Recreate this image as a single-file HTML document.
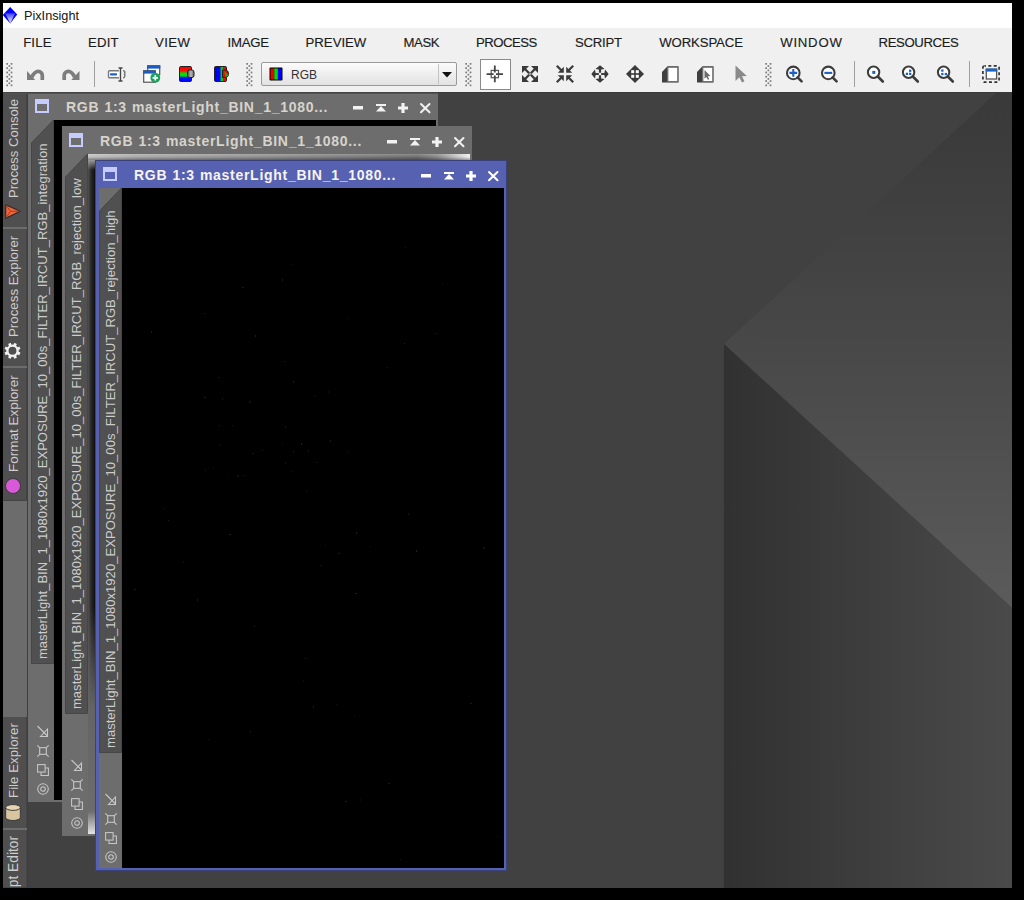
<!DOCTYPE html>
<html><head><meta charset="utf-8"><style>
*{box-sizing:border-box}
html,body{margin:0;padding:0}
body{width:1024px;height:900px;background:#000;position:relative;overflow:hidden;font-family:"Liberation Sans",sans-serif}
.a{position:absolute}
svg.a{overflow:visible}
.mi{position:absolute;top:36px;font-size:13.2px;color:#1c1c1c;line-height:13px;white-space:nowrap;-webkit-text-stroke:0.15px #1c1c1c}
.ttl{position:absolute;font-weight:bold;font-size:14px;letter-spacing:0.72px;word-spacing:0.5px;line-height:18px;color:#dcdad2;white-space:nowrap}
.rot{position:absolute;font-size:13px;color:#cccccc;white-space:nowrap;transform-origin:0 0;transform:rotate(-90deg);line-height:15px}
.sep{position:absolute;width:1px;height:26px;background:#a0a0a0}
</style></head><body>
<div class="a" style="left:3px;top:3px;width:1009px;height:25px;background:#fff"></div>
<svg class="a" style="left:3px;top:7px" width="15" height="17" viewBox="0 0 15 17"><defs><linearGradient id="dg" x1="0" y1="0" x2="0" y2="1"><stop offset="0" stop-color="#3a3aff"/><stop offset="0.55" stop-color="#a8b0f4"/><stop offset="1" stop-color="#e4e6f6"/></linearGradient></defs>
 <polygon points="7.2,0 14.2,7.6 7.2,16.6 -0.2,8" fill="#0000ff"/>
 <polygon points="2.2,6.2 12.2,6.2 7.2,16.6" fill="url(#dg)"/></svg>
<div class="a" style="left:24px;top:9px;font-size:12.7px;line-height:14px;color:#1a1a1a;-webkit-text-stroke:0.05px #1a1a1a">PixInsight</div>
<div class="a" style="left:3px;top:28px;width:1009px;height:64px;background:#f0f0f0"></div>
<div class="mi" style="left:23.2px;letter-spacing:0.13px">FILE</div>
<div class="mi" style="left:88px;letter-spacing:0.17px">EDIT</div>
<div class="mi" style="left:155px;letter-spacing:0.4px">VIEW</div>
<div class="mi" style="left:227.6px;letter-spacing:-0.28px">IMAGE</div>
<div class="mi" style="left:305.6px;letter-spacing:-0.02px">PREVIEW</div>
<div class="mi" style="left:403.6px;letter-spacing:-0.5px">MASK</div>
<div class="mi" style="left:476px;letter-spacing:-0.52px">PROCESS</div>
<div class="mi" style="left:575px;letter-spacing:-0.28px">SCRIPT</div>
<div class="mi" style="left:659.2px;letter-spacing:-0.12px">WORKSPACE</div>
<div class="mi" style="left:780.2px;letter-spacing:0.76px">WINDOW</div>
<div class="mi" style="left:878.5px;letter-spacing:-0.39px">RESOURCES</div>
<svg class="a" style="left:6px;top:62px" width="7" height="25" viewBox="0 0 7 25"><rect x="0.3" y="1.0" width="1.7" height="1.7" fill="#7c7c7c"/><rect x="4.7" y="1.0" width="1.7" height="1.7" fill="#7c7c7c"/><rect x="0.3" y="5.3" width="1.7" height="1.7" fill="#7c7c7c"/><rect x="4.7" y="5.3" width="1.7" height="1.7" fill="#7c7c7c"/><rect x="0.3" y="9.6" width="1.7" height="1.7" fill="#7c7c7c"/><rect x="4.7" y="9.6" width="1.7" height="1.7" fill="#7c7c7c"/><rect x="0.3" y="13.899999999999999" width="1.7" height="1.7" fill="#7c7c7c"/><rect x="4.7" y="13.899999999999999" width="1.7" height="1.7" fill="#7c7c7c"/><rect x="0.3" y="18.2" width="1.7" height="1.7" fill="#7c7c7c"/><rect x="4.7" y="18.2" width="1.7" height="1.7" fill="#7c7c7c"/><rect x="0.3" y="22.5" width="1.7" height="1.7" fill="#7c7c7c"/><rect x="4.7" y="22.5" width="1.7" height="1.7" fill="#7c7c7c"/><rect x="2.5" y="3.2" width="1.7" height="1.7" fill="#7c7c7c"/><rect x="2.5" y="7.5" width="1.7" height="1.7" fill="#7c7c7c"/><rect x="2.5" y="11.8" width="1.7" height="1.7" fill="#7c7c7c"/><rect x="2.5" y="16.099999999999998" width="1.7" height="1.7" fill="#7c7c7c"/><rect x="2.5" y="20.4" width="1.7" height="1.7" fill="#7c7c7c"/></svg>
<svg class="a" style="left:246px;top:62px" width="7" height="25" viewBox="0 0 7 25"><rect x="0.3" y="1.0" width="1.7" height="1.7" fill="#7c7c7c"/><rect x="4.7" y="1.0" width="1.7" height="1.7" fill="#7c7c7c"/><rect x="0.3" y="5.3" width="1.7" height="1.7" fill="#7c7c7c"/><rect x="4.7" y="5.3" width="1.7" height="1.7" fill="#7c7c7c"/><rect x="0.3" y="9.6" width="1.7" height="1.7" fill="#7c7c7c"/><rect x="4.7" y="9.6" width="1.7" height="1.7" fill="#7c7c7c"/><rect x="0.3" y="13.899999999999999" width="1.7" height="1.7" fill="#7c7c7c"/><rect x="4.7" y="13.899999999999999" width="1.7" height="1.7" fill="#7c7c7c"/><rect x="0.3" y="18.2" width="1.7" height="1.7" fill="#7c7c7c"/><rect x="4.7" y="18.2" width="1.7" height="1.7" fill="#7c7c7c"/><rect x="0.3" y="22.5" width="1.7" height="1.7" fill="#7c7c7c"/><rect x="4.7" y="22.5" width="1.7" height="1.7" fill="#7c7c7c"/><rect x="2.5" y="3.2" width="1.7" height="1.7" fill="#7c7c7c"/><rect x="2.5" y="7.5" width="1.7" height="1.7" fill="#7c7c7c"/><rect x="2.5" y="11.8" width="1.7" height="1.7" fill="#7c7c7c"/><rect x="2.5" y="16.099999999999998" width="1.7" height="1.7" fill="#7c7c7c"/><rect x="2.5" y="20.4" width="1.7" height="1.7" fill="#7c7c7c"/></svg>
<svg class="a" style="left:465px;top:62px" width="7" height="25" viewBox="0 0 7 25"><rect x="0.3" y="1.0" width="1.7" height="1.7" fill="#7c7c7c"/><rect x="4.7" y="1.0" width="1.7" height="1.7" fill="#7c7c7c"/><rect x="0.3" y="5.3" width="1.7" height="1.7" fill="#7c7c7c"/><rect x="4.7" y="5.3" width="1.7" height="1.7" fill="#7c7c7c"/><rect x="0.3" y="9.6" width="1.7" height="1.7" fill="#7c7c7c"/><rect x="4.7" y="9.6" width="1.7" height="1.7" fill="#7c7c7c"/><rect x="0.3" y="13.899999999999999" width="1.7" height="1.7" fill="#7c7c7c"/><rect x="4.7" y="13.899999999999999" width="1.7" height="1.7" fill="#7c7c7c"/><rect x="0.3" y="18.2" width="1.7" height="1.7" fill="#7c7c7c"/><rect x="4.7" y="18.2" width="1.7" height="1.7" fill="#7c7c7c"/><rect x="0.3" y="22.5" width="1.7" height="1.7" fill="#7c7c7c"/><rect x="4.7" y="22.5" width="1.7" height="1.7" fill="#7c7c7c"/><rect x="2.5" y="3.2" width="1.7" height="1.7" fill="#7c7c7c"/><rect x="2.5" y="7.5" width="1.7" height="1.7" fill="#7c7c7c"/><rect x="2.5" y="11.8" width="1.7" height="1.7" fill="#7c7c7c"/><rect x="2.5" y="16.099999999999998" width="1.7" height="1.7" fill="#7c7c7c"/><rect x="2.5" y="20.4" width="1.7" height="1.7" fill="#7c7c7c"/></svg>
<svg class="a" style="left:765px;top:62px" width="7" height="25" viewBox="0 0 7 25"><rect x="0.3" y="1.0" width="1.7" height="1.7" fill="#7c7c7c"/><rect x="4.7" y="1.0" width="1.7" height="1.7" fill="#7c7c7c"/><rect x="0.3" y="5.3" width="1.7" height="1.7" fill="#7c7c7c"/><rect x="4.7" y="5.3" width="1.7" height="1.7" fill="#7c7c7c"/><rect x="0.3" y="9.6" width="1.7" height="1.7" fill="#7c7c7c"/><rect x="4.7" y="9.6" width="1.7" height="1.7" fill="#7c7c7c"/><rect x="0.3" y="13.899999999999999" width="1.7" height="1.7" fill="#7c7c7c"/><rect x="4.7" y="13.899999999999999" width="1.7" height="1.7" fill="#7c7c7c"/><rect x="0.3" y="18.2" width="1.7" height="1.7" fill="#7c7c7c"/><rect x="4.7" y="18.2" width="1.7" height="1.7" fill="#7c7c7c"/><rect x="0.3" y="22.5" width="1.7" height="1.7" fill="#7c7c7c"/><rect x="4.7" y="22.5" width="1.7" height="1.7" fill="#7c7c7c"/><rect x="2.5" y="3.2" width="1.7" height="1.7" fill="#7c7c7c"/><rect x="2.5" y="7.5" width="1.7" height="1.7" fill="#7c7c7c"/><rect x="2.5" y="11.8" width="1.7" height="1.7" fill="#7c7c7c"/><rect x="2.5" y="16.099999999999998" width="1.7" height="1.7" fill="#7c7c7c"/><rect x="2.5" y="20.4" width="1.7" height="1.7" fill="#7c7c7c"/></svg>
<div class="sep" style="left:94px;top:61px"></div>
<div class="sep" style="left:854px;top:61px"></div>
<div class="sep" style="left:969px;top:61px"></div>
<svg class="a" style="left:27px;top:69px" width="18" height="12" viewBox="0 0 18 12"><polygon points="0,1.9 0,11 8.2,11" fill="#7d7d7d"/><path d="M4.8 8.2 Q7 3 11.2 2.3 A4.1 4.1 0 0 1 15.3 6.3 L15.3 11" fill="none" stroke="#7d7d7d" stroke-width="3.7"/></svg>
<svg class="a" style="left:62px;top:69px" width="18" height="12" viewBox="0 0 18 12"><g transform="translate(17.5,0) scale(-1,1)"><polygon points="0,1.9 0,11 8.2,11" fill="#7d7d7d"/><path d="M4.8 8.2 Q7 3 11.2 2.3 A4.1 4.1 0 0 1 15.3 6.3 L15.3 11" fill="none" stroke="#7d7d7d" stroke-width="3.7"/></g></svg>
<svg class="a" style="left:107px;top:66px" width="19" height="16" viewBox="0 0 19 16"><rect x="1.5" y="4.8" width="16" height="7" rx="1" fill="#fff" stroke="#7a7a7a" stroke-width="1.4"/><rect x="3" y="7.2" width="7" height="2.4" rx="0.8" fill="#1a62c8"/><rect x="12" y="3" width="4" height="11" fill="#f0f0f0"/><path d="M11.5 2h4M13.5 2v13M11.5 15h4" stroke="#444" stroke-width="1.3" fill="none"/><path d="M17.8 5v6" stroke="#7a7a7a" stroke-width="1.2"/></svg>
<svg class="a" style="left:143px;top:65px" width="18" height="18" viewBox="0 0 18 18"><rect x="4.7" y="0.7" width="12" height="9" fill="#fff" stroke="#555" stroke-width="1.2"/><rect x="4.1" y="0.6" width="13.2" height="3" fill="#1a5cc0"/><rect x="0.7" y="5.7" width="11.5" height="11.5" fill="#fff" stroke="#555" stroke-width="1.2"/><rect x="0.1" y="5.6" width="12.7" height="3" fill="#1a5cc0"/><circle cx="12.3" cy="12.8" r="4.9" fill="#19a25c"/><path d="M9.6 12.8h5.4M12.3 10.1v5.4" stroke="#fff" stroke-width="1.7"/></svg>
<svg class="a" style="left:179px;top:66px" width="17" height="16" viewBox="0 0 17 16"><defs><linearGradient id="rgbv" x1="0" y1="0" x2="0" y2="1"><stop offset="0.05" stop-color="#ff0000"/><stop offset="0.3" stop-color="#ff1000"/><stop offset="0.45" stop-color="#00e000"/><stop offset="0.62" stop-color="#00e000"/><stop offset="0.75" stop-color="#0010ff"/><stop offset="1" stop-color="#0000ff"/></linearGradient>
<linearGradient id="knob" x1="0" y1="0" x2="1" y2="0"><stop offset="0" stop-color="#444"/><stop offset="0.5" stop-color="#bbb"/><stop offset="1" stop-color="#666"/></linearGradient></defs>
<rect x="0.5" y="0.5" width="12" height="15" rx="1.2" fill="url(#rgbv)" stroke="#222" stroke-width="1"/><rect x="8.5" y="4" width="6.5" height="7.5" rx="2" fill="url(#knob)" stroke="#222" stroke-width="1"/></svg>
<svg class="a" style="left:214px;top:66px" width="17" height="16" viewBox="0 0 17 16"><rect x="0.5" y="0.5" width="12" height="15" rx="1.2" fill="#0000ff" stroke="#222" stroke-width="1"/><rect x="6.5" y="1" width="3" height="14" fill="#00d000"/><rect x="9.5" y="1" width="2.5" height="14" fill="#ff0000"/><path d="M8.5 4 h3.5 a3 3.8 0 0 1 0 7.5 h-3.5z" fill="#ff0000" stroke="#222" stroke-width="1"/><polygon points="10,5 14.5,9.5 12,11" fill="#00c000"/></svg>
<div class="a" style="left:261px;top:62px;width:196px;height:24px;border:1px solid #9a9a9a;border-radius:2px;background:linear-gradient(#fbfbfb,#e2e2e2)"></div>
<div class="a" style="left:438px;top:64px;width:1px;height:20px;background:#c4c4c4"></div>
<svg class="a" style="left:442px;top:72px" width="10" height="6" viewBox="0 0 10 6"><polygon points="0,0 10,0 5,5.5" fill="#111"/></svg>
<svg class="a" style="left:269px;top:67px" width="14" height="14" viewBox="0 0 14 14"><rect x="0.5" y="0.5" width="13" height="13" rx="1" fill="#000"/><rect x="1.5" y="1.5" width="3.8" height="11" fill="#f00000"/><rect x="5.3" y="1.5" width="3.6" height="11" fill="#00e000"/><rect x="8.9" y="1.5" width="3.6" height="11" fill="#0000ff"/></svg>
<div class="a" style="left:291px;top:68px;font-size:12px;line-height:14px;color:#333">RGB</div>
<div class="a" style="left:480px;top:59px;width:31px;height:31px;border:1.5px solid #8a8a8a;background:#fff"></div>
<svg class="a" style="left:486px;top:65px" width="18" height="18" viewBox="0 0 18 18"><rect x="5.2" y="5.4" width="7.3" height="7.3" fill="none" stroke="#555" stroke-width="1.2"/><path d="M8.8 0.6V7.6M8.8 10.6V17.2M0.6 9.1H7.6M10 9.1H17" stroke="#444" stroke-width="1.8"/></svg>
<svg class="a" style="left:522px;top:66px" width="16" height="16" viewBox="0 0 16 16"><g transform="rotate(0 8 8)"><polygon points="0,0 7,0 0,7" fill="#3a3a3a"/><path d="M2 2L7.2 7.2" stroke="#3a3a3a" stroke-width="2.3"/></g><g transform="rotate(90 8 8)"><polygon points="0,0 7,0 0,7" fill="#3a3a3a"/><path d="M2 2L7.2 7.2" stroke="#3a3a3a" stroke-width="2.3"/></g><g transform="rotate(180 8 8)"><polygon points="0,0 7,0 0,7" fill="#3a3a3a"/><path d="M2 2L7.2 7.2" stroke="#3a3a3a" stroke-width="2.3"/></g><g transform="rotate(270 8 8)"><polygon points="0,0 7,0 0,7" fill="#3a3a3a"/><path d="M2 2L7.2 7.2" stroke="#3a3a3a" stroke-width="2.3"/></g><rect x="7" y="7" width="2" height="2" fill="#999"/></svg>
<svg class="a" style="left:556px;top:65px" width="18" height="18" viewBox="0 0 18 18"><g transform="rotate(0 9 9)"><polygon points="7.8,7.8 1.8,7.8 7.8,1.8" fill="#3a3a3a"/><path d="M0.8 0.8L5.5 5.5" stroke="#3a3a3a" stroke-width="2.2"/></g><g transform="rotate(90 9 9)"><polygon points="7.8,7.8 1.8,7.8 7.8,1.8" fill="#3a3a3a"/><path d="M0.8 0.8L5.5 5.5" stroke="#3a3a3a" stroke-width="2.2"/></g><g transform="rotate(180 9 9)"><polygon points="7.8,7.8 1.8,7.8 7.8,1.8" fill="#3a3a3a"/><path d="M0.8 0.8L5.5 5.5" stroke="#3a3a3a" stroke-width="2.2"/></g><g transform="rotate(270 9 9)"><polygon points="7.8,7.8 1.8,7.8 7.8,1.8" fill="#3a3a3a"/><path d="M0.8 0.8L5.5 5.5" stroke="#3a3a3a" stroke-width="2.2"/></g></svg>
<svg class="a" style="left:591px;top:65px" width="18" height="18" viewBox="0 0 18 18"><g transform="rotate(0 9 9)"><path d="M9 0.3 L13.5 4 L10.1 4.6 L10.1 7.8 L7.9 7.8 L7.9 4.6 L4.5 4 Z" fill="#3a3a3a"/></g><g transform="rotate(90 9 9)"><path d="M9 0.3 L13.5 4 L10.1 4.6 L10.1 7.8 L7.9 7.8 L7.9 4.6 L4.5 4 Z" fill="#3a3a3a"/></g><g transform="rotate(180 9 9)"><path d="M9 0.3 L13.5 4 L10.1 4.6 L10.1 7.8 L7.9 7.8 L7.9 4.6 L4.5 4 Z" fill="#3a3a3a"/></g><g transform="rotate(270 9 9)"><path d="M9 0.3 L13.5 4 L10.1 4.6 L10.1 7.8 L7.9 7.8 L7.9 4.6 L4.5 4 Z" fill="#3a3a3a"/></g></svg>
<svg class="a" style="left:626px;top:65px" width="18" height="18" viewBox="0 0 18 18"><polygon points="9,0 18,9 9,18 0,9" fill="#3a3a3a"/><rect x="5.2" y="5.2" width="3" height="3" fill="#fff"/><rect x="9.8" y="5.2" width="3" height="3" fill="#fff"/><rect x="5.2" y="9.8" width="3" height="3" fill="#fff"/><rect x="9.8" y="9.8" width="3" height="3" fill="#fff"/></svg>
<svg class="a" style="left:662px;top:66px" width="17" height="17" viewBox="0 0 17 17"><polygon points="0,6 5.5,0.3 16.5,0.3 16.5,16.5 0,16.5" fill="#3f3f3f"/><rect x="5.8" y="1.2" width="10" height="14.4" fill="#fff" stroke="#707070" stroke-width="1.2"/></svg>
<svg class="a" style="left:697px;top:66px" width="17" height="17" viewBox="0 0 17 17"><polygon points="0,6 5.5,0.3 16.5,0.3 16.5,16.5 0,16.5" fill="#3f3f3f"/><rect x="5.8" y="1.2" width="10" height="14.4" fill="#fff" stroke="#707070" stroke-width="1.2"/><path d="M7.5 4 L13.5 10 L10.8 10.3 L12.2 13.2 L10.8 13.8 L9.4 11 L7.5 12.8 Z" fill="#6a6a6a"/></svg>
<svg class="a" style="left:735px;top:65px" width="12" height="18" viewBox="0 0 12 18"><path d="M0.5 0.5 L0.5 16 L4.3 12.3 L7 17.5 L9.5 16.3 L7 11.2 L11.8 11 Z" fill="#8a8a8a"/></svg>
<svg class="a" style="left:785px;top:65px" width="18" height="18" viewBox="0 0 18 18"><circle cx="8.3" cy="7.9" r="6.3" fill="#fff" stroke="#3c3c3c" stroke-width="2.05"/><path d="M12.6 12.299999999999999L16.6 16.3" stroke="#3c3c3c" stroke-width="2.6" stroke-linecap="round"/><path d="M4.4 7.9h7.8M8.3 4v7.8" stroke="#1a62c8" stroke-width="2.1"/></svg>
<svg class="a" style="left:820px;top:65px" width="18" height="18" viewBox="0 0 18 18"><circle cx="8.3" cy="7.9" r="6.3" fill="#fff" stroke="#3c3c3c" stroke-width="2.05"/><path d="M12.6 12.299999999999999L16.6 16.3" stroke="#3c3c3c" stroke-width="2.6" stroke-linecap="round"/><path d="M4.4 7.9h7.8" stroke="#1a62c8" stroke-width="2.1"/></svg>
<svg class="a" style="left:866px;top:65px" width="18" height="18" viewBox="0 0 18 18"><circle cx="7.6" cy="7.2" r="5.7" fill="#fff" stroke="#3c3c3c" stroke-width="2.05"/><path d="M11.8 11.5L16.8 16.5" stroke="#3c3c3c" stroke-width="2.6" stroke-linecap="round"/><rect x="6.3" y="5.9" width="3" height="3" fill="#1a62c8"/></svg>
<svg class="a" style="left:901px;top:65px" width="18" height="18" viewBox="0 0 18 18"><circle cx="7.6" cy="7.2" r="5.7" fill="#fff" stroke="#3c3c3c" stroke-width="2.05"/><path d="M11.8 11.5L16.8 16.5" stroke="#3c3c3c" stroke-width="2.6" stroke-linecap="round"/><rect x="8" y="4.6" width="2.3" height="2.3" fill="#1a62c8"/><rect x="4.8" y="7.7" width="2.3" height="2.3" fill="#1a62c8"/><rect x="8" y="7.7" width="2.3" height="2.3" fill="#1a62c8"/></svg>
<svg class="a" style="left:936px;top:65px" width="18" height="18" viewBox="0 0 18 18"><circle cx="7.6" cy="7.2" r="5.7" fill="#fff" stroke="#3c3c3c" stroke-width="2.05"/><path d="M11.8 11.5L16.8 16.5" stroke="#3c3c3c" stroke-width="2.6" stroke-linecap="round"/><rect x="5.2" y="4.4" width="2.3" height="2.3" fill="#1a62c8"/><rect x="5.2" y="7.9" width="2.3" height="2.3" fill="#1a62c8"/><rect x="8.7" y="7.9" width="2.3" height="2.3" fill="#1a62c8"/></svg>
<svg class="a" style="left:982px;top:65px" width="18" height="18" viewBox="0 0 18 18"><rect x="0.9" y="0.9" width="16.2" height="16.2" rx="1.5" fill="none" stroke="#333" stroke-width="1.7" stroke-dasharray="3 2.4" stroke-dashoffset="1.5"/><rect x="4.3" y="4.2" width="10.3" height="9.8" fill="#fff" stroke="#555" stroke-width="1.3"/><rect x="3.7" y="3.6" width="11.5" height="3" fill="#1a62c8"/></svg>
<svg class="a" style="left:3px;top:92px" width="1009" height="796" viewBox="3 92 1009 796">
  <defs>
   <linearGradient id="gU" x1="0" y1="92" x2="0" y2="608" gradientUnits="userSpaceOnUse">
    <stop offset="0" stop-color="#393939"/><stop offset="0.49" stop-color="#484848"/><stop offset="1" stop-color="#5b5b5b"/>
   </linearGradient>
   <linearGradient id="gL" x1="724" y1="0" x2="1012" y2="0" gradientUnits="userSpaceOnUse">
    <stop offset="0" stop-color="#313131"/><stop offset="1" stop-color="#4a4a4a"/>
   </linearGradient>
  </defs>
  <rect x="3" y="92" width="1009" height="796" fill="#414141"/>
  <polygon points="724,344 997,92 1012,92 1012,608" fill="url(#gU)"/>
  <polygon points="724,344 1012,608 1012,888 724,888" fill="url(#gL)"/>
  <rect x="3" y="92" width="1009" height="1" fill="#3a3a3a"/>
 </svg>
<div class="a" style="left:0;top:0;width:1024px;height:888px;overflow:hidden">
<div class="a" style="left:3px;top:93px;width:24px;height:795px;background:#6c6c6c"></div>
<div class="a" style="left:3px;top:93px;width:24px;height:135px;background:#4f4f4f;border-right:1px solid #444;border-bottom:1px solid #444"></div>
<div class="a" style="left:3px;top:229px;width:24px;height:138px;background:#4f4f4f;border-right:1px solid #444;border-bottom:1px solid #444"></div>
<div class="a" style="left:3px;top:368px;width:24px;height:133px;background:#4f4f4f;border-right:1px solid #444;border-bottom:1px solid #444"></div>
<div class="a" style="left:3px;top:717px;width:24px;height:112px;background:#4f4f4f;border-right:1px solid #444;border-bottom:1px solid #444"></div>
<div class="a" style="left:3px;top:830px;width:24px;height:58px;background:#4f4f4f;border-right:1px solid #444;border-bottom:1px solid #444"></div>
<div class="a" style="left:3px;top:227px;width:24px;height:2px;background:#6c6c6c"></div>
<div class="a" style="left:3px;top:366px;width:24px;height:2px;background:#6c6c6c"></div>
<div class="a" style="left:3px;top:828px;width:24px;height:2px;background:#6c6c6c"></div>
<div class="a" style="left:27px;top:93px;width:1px;height:795px;background:#3f3f3f"></div>
<div class="rot" style="left:6px;top:197.5px;color:#cdcdcd;font-size:13.1px">Process Console</div>
<div class="rot" style="left:6px;top:336.7px;color:#cdcdcd;font-size:13.3px">Process Explorer</div>
<div class="rot" style="left:6px;top:471.7px;color:#cdcdcd;font-size:13.5px">Format Explorer</div>
<div class="rot" style="left:6px;top:798.3px;color:#cdcdcd;font-size:13.35px">File Explorer</div>
<div class="rot" style="left:6px;top:911.3px;color:#cdcdcd;font-size:13.8px">Script Editor</div>
<svg class="a" style="left:5px;top:204px" width="16" height="15" viewBox="0 0 16 15"><polygon points="0.7,0.7 15.3,7.3 0.7,14.3" fill="#f0643c" stroke="#2a2a2a" stroke-width="1.1"/><path d="M0.7 0.7L5.5 7.3L0.7 14.3M5.5 7.3H15.3" stroke="#a83818" stroke-width="0.9" fill="none"/></svg>
<svg class="a" style="left:4px;top:342px" width="17" height="17" viewBox="0 0 17 17"><g transform="translate(8.5,8.8)"><circle r="5.1" fill="none" stroke="#f2f2f2" stroke-width="2.3"/><g stroke="#f2f2f2" stroke-width="2.8"><path d="M0 -5.5V-8" transform="rotate(22.5)"/><path d="M0 -5.5V-8" transform="rotate(67.5)"/><path d="M0 -5.5V-8" transform="rotate(112.5)"/><path d="M0 -5.5V-8" transform="rotate(157.5)"/><path d="M0 -5.5V-8" transform="rotate(202.5)"/><path d="M0 -5.5V-8" transform="rotate(247.5)"/><path d="M0 -5.5V-8" transform="rotate(292.5)"/><path d="M0 -5.5V-8" transform="rotate(337.5)"/></g></g></svg>
<div class="a" style="left:5px;top:478px;width:16px;height:16px;border-radius:50%;background:#d85ad8;border:1px solid #3a3a3a"></div>
<svg class="a" style="left:5px;top:804px" width="16" height="17" viewBox="0 0 16 17"><path d="M0.7 3.5 V13.5 A7.3 3 0 0 0 15.3 13.5 V3.5" fill="#d9c5a0" stroke="#333" stroke-width="0.9"/><ellipse cx="8" cy="3.5" rx="7.3" ry="2.9" fill="#e6d4b2" stroke="#333" stroke-width="0.9"/></svg>
</div>
<div class="a" style="left:28px;top:92px;width:410px;height:710px;background:#6d6d6d;overflow:hidden">
<div class="a" style="left:7px;top:7px;width:14px;height:14px;border:2px solid #c6ccff;border-top-width:5px"></div>
<div class="ttl" style="left:38px;top:5.65px;color:#d6d4cc">RGB 1:3 masterLight_BIN_1_1080...</div>
<svg class="a" style="left:325px;top:14px" width="10" height="4" viewBox="0 0 10 4"><rect x="0" y="0" width="10" height="3.5" fill="#f2f2f2"/></svg>
<svg class="a" style="left:347.5px;top:12px" width="10" height="8" viewBox="0 0 10 8"><rect x="0" y="0" width="10" height="2" fill="#f2f2f2"/><polygon points="5,2 10,7.5 0,7.5" fill="#f2f2f2"/></svg>
<svg class="a" style="left:370px;top:10.5px" width="10" height="10" viewBox="0 0 10 10"><path d="M5 0v10M0 5h10" stroke="#f2f2f2" stroke-width="3.2"/></svg>
<svg class="a" style="left:392px;top:10.5px" width="11" height="10" viewBox="0 0 11 10"><path d="M1 1L9.5 9.2M9.5 1L1 9.2" stroke="#f2f2f2" stroke-width="2" stroke-linecap="round"/></svg>
<div class="a" style="left:26px;top:28px;width:382px;height:680px;background:#000"></div>
<svg class="a" style="left:3px;top:28px" width="23" height="544" viewBox="0 0 23 544"><polygon points="22.5,0 22.5,543.5 0.5,543.5 0.5,23" fill="#505050" stroke="#464646" stroke-width="1"/></svg>
<div class="rot" style="left:6.8px;top:567px;font-size:13.05px">masterLight_BIN_1_1080x1920_EXPOSURE_10_00s_FILTER_IRCUT_RGB_integration</div>
<svg class="a" style="left:8.5px;top:634px" width="12" height="12" viewBox="0 0 12 12"><path d="M0.5 0L10.5 10" stroke="#c8c8c8" stroke-width="1.1"/><polygon points="10.5,3 10.5,10.5 3.5,10.5" fill="none" stroke="#c8c8c8" stroke-width="1.05"/></svg>
<svg class="a" style="left:8.5px;top:653px" width="12" height="12" viewBox="0 0 12 12"><rect x="2.7" y="2.7" width="6.6" height="6.6" fill="none" stroke="#c8c8c8" stroke-width="1.1"/><path d="M0.3 0.3l2.4 2.4M11.7 0.3l-2.4 2.4M0.3 11.7l2.4-2.4M11.7 11.7l-2.4-2.4" stroke="#c8c8c8" stroke-width="1.1"/></svg>
<svg class="a" style="left:8.5px;top:672px" width="12" height="12" viewBox="0 0 12 12"><rect x="0.6" y="0.6" width="7.5" height="7.5" fill="none" stroke="#c8c8c8" stroke-width="1.05"/><path d="M4 8.2V11.4H11.4V4H8.2" fill="none" stroke="#c8c8c8" stroke-width="1.05"/></svg>
<svg class="a" style="left:8.5px;top:691px" width="12" height="12" viewBox="0 0 12 12"><circle cx="6" cy="6" r="5.3" fill="none" stroke="#c8c8c8" stroke-width="1.05"/><circle cx="6" cy="6" r="2.3" fill="none" stroke="#c8c8c8" stroke-width="1.05"/></svg>
</div>
<div class="a" style="left:62px;top:126px;width:410px;height:710px;background:#6d6d6d;overflow:hidden">
<div class="a" style="left:7px;top:7px;width:14px;height:14px;border:2px solid #c6ccff;border-top-width:5px"></div>
<div class="ttl" style="left:38px;top:5.65px;color:#d6d4cc">RGB 1:3 masterLight_BIN_1_1080...</div>
<svg class="a" style="left:325px;top:14px" width="10" height="4" viewBox="0 0 10 4"><rect x="0" y="0" width="10" height="3.5" fill="#f2f2f2"/></svg>
<svg class="a" style="left:347.5px;top:12px" width="10" height="8" viewBox="0 0 10 8"><rect x="0" y="0" width="10" height="2" fill="#f2f2f2"/><polygon points="5,2 10,7.5 0,7.5" fill="#f2f2f2"/></svg>
<svg class="a" style="left:370px;top:10.5px" width="10" height="10" viewBox="0 0 10 10"><path d="M5 0v10M0 5h10" stroke="#f2f2f2" stroke-width="3.2"/></svg>
<svg class="a" style="left:392px;top:10.5px" width="11" height="10" viewBox="0 0 11 10"><path d="M1 1L9.5 9.2M9.5 1L1 9.2" stroke="#f2f2f2" stroke-width="2" stroke-linecap="round"/></svg>
<div class="a" style="left:26px;top:28px;width:382px;height:680px;background:#000"></div>
<div class="a" style="left:26px;top:28px;width:8px;height:680px;background:linear-gradient(90deg,#505050,#282828 40%,#080808)"></div>
<div class="a" style="left:26px;top:480px;width:8px;height:228px;background:linear-gradient(rgba(106,106,106,0),#646464 45%,#6c6c6c 90%,#e4e4e4)"></div>
<div class="a" style="left:26px;top:28px;width:382px;height:6px;background:linear-gradient(180deg,rgba(255,255,255,.22),rgba(255,255,255,0) 50%,rgba(0,0,0,.35)),linear-gradient(90deg,#c0c0c0 0,#a8a8a8 50px,#8a8a8a 200px,#6e6e6e 330px,#8a8a8a 350px,#f0f0f0 382px)"></div>
<div class="a" style="left:26px;top:34px;width:8px;height:10px;background:linear-gradient(180deg,#9a9a9a,rgba(60,60,60,0))"></div>
<svg class="a" style="left:3px;top:28px" width="23" height="560" viewBox="0 0 23 560"><polygon points="22.5,0 22.5,559.5 0.5,559.5 0.5,23" fill="#505050" stroke="#464646" stroke-width="1"/></svg>
<div class="rot" style="left:6.8px;top:583px;font-size:13.05px">masterLight_BIN_1_1080x1920_EXPOSURE_10_00s_FILTER_IRCUT_RGB_rejection_low</div>
<svg class="a" style="left:8.5px;top:634px" width="12" height="12" viewBox="0 0 12 12"><path d="M0.5 0L10.5 10" stroke="#c8c8c8" stroke-width="1.1"/><polygon points="10.5,3 10.5,10.5 3.5,10.5" fill="none" stroke="#c8c8c8" stroke-width="1.05"/></svg>
<svg class="a" style="left:8.5px;top:653px" width="12" height="12" viewBox="0 0 12 12"><rect x="2.7" y="2.7" width="6.6" height="6.6" fill="none" stroke="#c8c8c8" stroke-width="1.1"/><path d="M0.3 0.3l2.4 2.4M11.7 0.3l-2.4 2.4M0.3 11.7l2.4-2.4M11.7 11.7l-2.4-2.4" stroke="#c8c8c8" stroke-width="1.1"/></svg>
<svg class="a" style="left:8.5px;top:672px" width="12" height="12" viewBox="0 0 12 12"><rect x="0.6" y="0.6" width="7.5" height="7.5" fill="none" stroke="#c8c8c8" stroke-width="1.05"/><path d="M4 8.2V11.4H11.4V4H8.2" fill="none" stroke="#c8c8c8" stroke-width="1.05"/></svg>
<svg class="a" style="left:8.5px;top:691px" width="12" height="12" viewBox="0 0 12 12"><circle cx="6" cy="6" r="5.3" fill="none" stroke="#c8c8c8" stroke-width="1.05"/><circle cx="6" cy="6" r="2.3" fill="none" stroke="#c8c8c8" stroke-width="1.05"/></svg>
</div>
<div class="a" style="left:96px;top:160px;width:410px;height:710px;background:#6d6d6d;overflow:hidden">
<div class="a" style="left:0;top:0;width:410px;height:28px;background:#5661b2"></div>
<div class="a" style="left:0;top:0;width:3px;height:710px;background:#5661b2"></div>
<div class="a" style="left:408px;top:0;width:2px;height:710px;background:#5661b2"></div>
<div class="a" style="left:0;top:708px;width:410px;height:2px;background:#5661b2"></div>
<div class="a" style="left:7px;top:7px;width:14px;height:14px;border:2px solid #c6ccff;border-top-width:5px"></div>
<div class="ttl" style="left:38px;top:5.65px;color:#f6f4ee">RGB 1:3 masterLight_BIN_1_1080...</div>
<svg class="a" style="left:325px;top:14px" width="10" height="4" viewBox="0 0 10 4"><rect x="0" y="0" width="10" height="3.5" fill="#ffffff"/></svg>
<svg class="a" style="left:347.5px;top:12px" width="10" height="8" viewBox="0 0 10 8"><rect x="0" y="0" width="10" height="2" fill="#ffffff"/><polygon points="5,2 10,7.5 0,7.5" fill="#ffffff"/></svg>
<svg class="a" style="left:370px;top:10.5px" width="10" height="10" viewBox="0 0 10 10"><path d="M5 0v10M0 5h10" stroke="#ffffff" stroke-width="3.2"/></svg>
<svg class="a" style="left:392px;top:10.5px" width="11" height="10" viewBox="0 0 11 10"><path d="M1 1L9.5 9.2M9.5 1L1 9.2" stroke="#ffffff" stroke-width="2" stroke-linecap="round"/></svg>
<div class="a" style="left:26px;top:28px;width:382px;height:680px;background:#000"></div>
<svg class="a" style="left:26px;top:28px" width="382" height="680" viewBox="0 0 382 680"><rect x="140" y="261" width="1" height="2" fill="rgb(15,15,15)"/><rect x="194" y="274" width="1" height="1" fill="rgb(30,30,30)"/><rect x="186" y="262" width="1" height="2" fill="rgb(21,21,21)"/><rect x="83" y="281" width="1" height="2" fill="rgb(17,17,17)"/><rect x="82" y="125" width="1" height="1" fill="rgb(26,26,26)"/><rect x="226" y="264" width="1" height="1" fill="rgb(23,23,23)"/><rect x="100" y="210" width="1" height="2" fill="rgb(19,19,19)"/><rect x="127" y="213" width="2" height="2" fill="rgb(17,17,17)"/><rect x="163" y="238" width="1" height="2" fill="rgb(20,20,20)"/><rect x="82" y="209" width="2" height="1" fill="rgb(28,28,28)"/><rect x="130" y="265" width="2" height="1" fill="rgb(19,19,19)"/><rect x="179" y="255" width="1" height="2" fill="rgb(29,29,29)"/><rect x="98" y="256" width="1" height="2" fill="rgb(16,16,16)"/><rect x="91" y="280" width="1" height="1" fill="rgb(18,18,18)"/><rect x="208" y="252" width="1" height="2" fill="rgb(24,24,24)"/><rect x="122" y="287" width="1" height="1" fill="rgb(28,28,28)"/><rect x="193" y="207" width="1" height="2" fill="rgb(16,16,16)"/><rect x="133" y="147" width="1" height="2" fill="rgb(28,28,28)"/><rect x="105" y="289" width="1" height="1" fill="rgb(14,14,14)"/><rect x="160" y="256" width="1" height="1" fill="rgb(15,15,15)"/><rect x="171" y="263" width="1" height="1" fill="rgb(26,26,26)"/><rect x="170" y="283" width="1" height="1" fill="rgb(22,22,22)"/><rect x="171" y="193" width="1" height="2" fill="rgb(27,27,27)"/><rect x="225" y="130" width="1" height="1" fill="rgb(18,18,18)"/><rect x="184" y="302" width="1" height="2" fill="rgb(14,14,14)"/><rect x="163" y="274" width="1" height="2" fill="rgb(18,18,18)"/><rect x="115" y="287" width="2" height="2" fill="rgb(18,18,18)"/><rect x="206" y="203" width="1" height="2" fill="rgb(15,15,15)"/><rect x="162" y="173" width="1" height="1" fill="rgb(26,26,26)"/><rect x="110" y="237" width="1" height="1" fill="rgb(20,20,20)"/><rect x="169" y="76" width="1" height="1" fill="rgb(15,15,15)"/><rect x="216" y="365" width="2" height="1" fill="rgb(25,25,25)"/><rect x="29" y="143" width="1" height="2" fill="rgb(26,26,26)"/><rect x="97" y="237" width="1" height="1" fill="rgb(25,25,25)"/><rect x="46" y="332" width="1" height="1" fill="rgb(28,28,28)"/><rect x="120" y="99" width="2" height="1" fill="rgb(24,24,24)"/><rect x="183" y="470" width="1" height="1" fill="rgb(30,30,30)"/><rect x="361" y="359" width="2" height="2" fill="rgb(18,18,18)"/><rect x="348" y="515" width="2" height="1" fill="rgb(23,23,23)"/><rect x="265" y="179" width="1" height="1" fill="rgb(25,25,25)"/><rect x="294" y="362" width="1" height="2" fill="rgb(30,30,30)"/><rect x="86" y="551" width="1" height="1" fill="rgb(20,20,20)"/><rect x="282" y="155" width="1" height="1" fill="rgb(30,30,30)"/><rect x="278" y="671" width="1" height="1" fill="rgb(22,22,22)"/><rect x="75" y="411" width="1" height="2" fill="rgb(25,25,25)"/><rect x="375" y="648" width="1" height="1" fill="rgb(25,25,25)"/><rect x="41" y="320" width="1" height="1" fill="rgb(24,24,24)"/><rect x="238" y="611" width="1" height="2" fill="rgb(14,14,14)"/><rect x="132" y="437" width="1" height="2" fill="rgb(17,17,17)"/><rect x="286" y="325" width="1" height="2" fill="rgb(19,19,19)"/><rect x="128" y="543" width="1" height="1" fill="rgb(26,26,26)"/><rect x="283" y="59" width="1" height="1" fill="rgb(19,19,19)"/><rect x="12" y="401" width="2" height="1" fill="rgb(28,28,28)"/><rect x="233" y="405" width="2" height="1" fill="rgb(29,29,29)"/><rect x="61" y="373" width="1" height="2" fill="rgb(14,14,14)"/><rect x="248" y="358" width="1" height="1" fill="rgb(18,18,18)"/><rect x="314" y="145" width="1" height="1" fill="rgb(22,22,22)"/><rect x="191" y="518" width="1" height="2" fill="rgb(24,24,24)"/><rect x="160" y="91" width="1" height="2" fill="rgb(25,25,25)"/><rect x="223" y="613" width="2" height="1" fill="rgb(27,27,27)"/><rect x="203" y="356" width="1" height="1" fill="rgb(14,14,14)"/><rect x="232" y="527" width="1" height="1" fill="rgb(18,18,18)"/><rect x="181" y="492" width="1" height="2" fill="rgb(15,15,15)"/><rect x="198" y="377" width="2" height="1" fill="rgb(17,17,17)"/><rect x="96" y="189" width="2" height="1" fill="rgb(17,17,17)"/><rect x="214" y="516" width="1" height="1" fill="rgb(16,16,16)"/><rect x="234" y="344" width="1" height="2" fill="rgb(30,30,30)"/><rect x="107" y="346" width="2" height="1" fill="rgb(29,29,29)"/><rect x="266" y="595" width="2" height="1" fill="rgb(22,22,22)"/><rect x="320" y="95" width="1" height="1" fill="rgb(17,17,17)"/></svg>
<svg class="a" style="left:3px;top:28px" width="23" height="565" viewBox="0 0 23 565"><polygon points="22.5,0 22.5,564.5 0.5,564.5 0.5,23" fill="#505050" stroke="#464646" stroke-width="1"/></svg>
<div class="rot" style="left:6.8px;top:588px;font-size:13.1px">masterLight_BIN_1_1080x1920_EXPOSURE_10_00s_FILTER_IRCUT_RGB_rejection_high</div>
<svg class="a" style="left:8.5px;top:634px" width="12" height="12" viewBox="0 0 12 12"><path d="M0.5 0L10.5 10" stroke="#c8c8c8" stroke-width="1.1"/><polygon points="10.5,3 10.5,10.5 3.5,10.5" fill="none" stroke="#c8c8c8" stroke-width="1.05"/></svg>
<svg class="a" style="left:8.5px;top:653px" width="12" height="12" viewBox="0 0 12 12"><rect x="2.7" y="2.7" width="6.6" height="6.6" fill="none" stroke="#c8c8c8" stroke-width="1.1"/><path d="M0.3 0.3l2.4 2.4M11.7 0.3l-2.4 2.4M0.3 11.7l2.4-2.4M11.7 11.7l-2.4-2.4" stroke="#c8c8c8" stroke-width="1.1"/></svg>
<svg class="a" style="left:8.5px;top:672px" width="12" height="12" viewBox="0 0 12 12"><rect x="0.6" y="0.6" width="7.5" height="7.5" fill="none" stroke="#c8c8c8" stroke-width="1.05"/><path d="M4 8.2V11.4H11.4V4H8.2" fill="none" stroke="#c8c8c8" stroke-width="1.05"/></svg>
<svg class="a" style="left:8.5px;top:691px" width="12" height="12" viewBox="0 0 12 12"><circle cx="6" cy="6" r="5.3" fill="none" stroke="#c8c8c8" stroke-width="1.05"/><circle cx="6" cy="6" r="2.3" fill="none" stroke="#c8c8c8" stroke-width="1.05"/></svg>
</div>
<div class="a" style="left:95px;top:160px;width:412px;height:711px;border:1px solid #3a4278"></div>
<div class="a" style="left:3px;top:92px;width:435px;height:2px;background:linear-gradient(#3e3e3e,#595959)"></div>
</body></html>
